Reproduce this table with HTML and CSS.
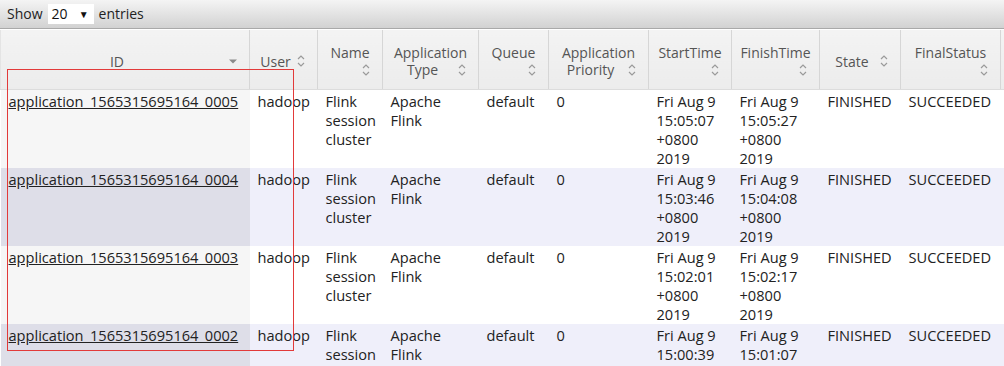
FILE: index.html
```html
<!DOCTYPE html>
<html>
<head>
<meta charset="utf-8">
<link rel="stylesheet" href="styles.css">
</head>
<body>
<div class="page">
  <div class="toolbar">
    <span>Show</span>
    <span class="select"><span>20</span><span class="caret">&#9660;</span></span>
    <span>entries</span>
  </div>
  <table class="apps">
    <colgroup>
      <col class="c-id"><col class="c-user"><col class="c-name"><col class="c-type"><col class="c-queue"><col class="c-prio"><col class="c-start"><col class="c-finish"><col class="c-state"><col class="c-final"><col class="c-more">
    </colgroup>
    <thead>
      <tr>
        <th><div class="sw">ID<span class="si"><svg width="10" height="16" viewBox="0 0 10 16"><polygon points="1,6.5 9,6.5 5,10.5" fill="#8a8a8a"/></svg></span></div></th>
        <th><div class="sw">User<span class="si"><svg class="both" width="10" height="16" viewBox="0 0 10 16"><polyline points="2,6 5,3 8,6"/><polyline points="2,10 5,13 8,10"/></svg></span></div></th>
        <th><div class="sw">Name<span class="si"><svg class="both" width="10" height="16" viewBox="0 0 10 16"><polyline points="2,6 5,3 8,6"/><polyline points="2,10 5,13 8,10"/></svg></span></div></th>
        <th><div class="sw">Application Type<span class="si"><svg class="both" width="10" height="16" viewBox="0 0 10 16"><polyline points="2,6 5,3 8,6"/><polyline points="2,10 5,13 8,10"/></svg></span></div></th>
        <th><div class="sw">Queue<span class="si"><svg class="both" width="10" height="16" viewBox="0 0 10 16"><polyline points="2,6 5,3 8,6"/><polyline points="2,10 5,13 8,10"/></svg></span></div></th>
        <th><div class="sw">Application Priority<span class="si"><svg class="both" width="10" height="16" viewBox="0 0 10 16"><polyline points="2,6 5,3 8,6"/><polyline points="2,10 5,13 8,10"/></svg></span></div></th>
        <th><div class="sw">StartTime<span class="si"><svg class="both" width="10" height="16" viewBox="0 0 10 16"><polyline points="2,6 5,3 8,6"/><polyline points="2,10 5,13 8,10"/></svg></span></div></th>
        <th><div class="sw">FinishTime<span class="si"><svg class="both" width="10" height="16" viewBox="0 0 10 16"><polyline points="2,6 5,3 8,6"/><polyline points="2,10 5,13 8,10"/></svg></span></div></th>
        <th><div class="sw">State<span class="si"><svg class="both" width="10" height="16" viewBox="0 0 10 16"><polyline points="2,6 5,3 8,6"/><polyline points="2,10 5,13 8,10"/></svg></span></div></th>
        <th><div class="sw">FinalStatus<span class="si"><svg class="both" width="10" height="16" viewBox="0 0 10 16"><polyline points="2,6 5,3 8,6"/><polyline points="2,10 5,13 8,10"/></svg></span></div></th>
        <th></th>
      </tr>
    </thead>
    <tbody>
      <tr class="odd">
        <td class="sorted"><a href="#">application_1565315695164_0005</a></td>
        <td>hadoop</td><td>Flink session cluster</td><td>Apache Flink</td><td>default</td><td>0</td>
        <td>Fri Aug 9 15:05:07 +0800 2019</td><td>Fri Aug 9 15:05:27 +0800 2019</td>
        <td>FINISHED</td><td>SUCCEEDED</td><td></td>
      </tr>
      <tr class="even">
        <td class="sorted"><a href="#">application_1565315695164_0004</a></td>
        <td>hadoop</td><td>Flink session cluster</td><td>Apache Flink</td><td>default</td><td>0</td>
        <td>Fri Aug 9 15:03:46 +0800 2019</td><td>Fri Aug 9 15:04:08 +0800 2019</td>
        <td>FINISHED</td><td>SUCCEEDED</td><td></td>
      </tr>
      <tr class="odd">
        <td class="sorted"><a href="#">application_1565315695164_0003</a></td>
        <td>hadoop</td><td>Flink session cluster</td><td>Apache Flink</td><td>default</td><td>0</td>
        <td>Fri Aug 9 15:02:01 +0800 2019</td><td>Fri Aug 9 15:02:17 +0800 2019</td>
        <td>FINISHED</td><td>SUCCEEDED</td><td></td>
      </tr>
      <tr class="even">
        <td class="sorted"><a href="#">application_1565315695164_0002</a></td>
        <td>hadoop</td><td>Flink session cluster</td><td>Apache Flink</td><td>default</td><td>0</td>
        <td>Fri Aug 9 15:00:39 +0800 2019</td><td>Fri Aug 9 15:01:07 +0800 2019</td>
        <td>FINISHED</td><td>SUCCEEDED</td><td></td>
      </tr>
    </tbody>
  </table>
  <div class="highlight"></div>
</div>
</body>
</html>
```

FILE: styles.css
```css
html, body {
  margin: 0;
  padding: 0;
  background: #fff;
  overflow: hidden;
}
.page {
  position: relative;
  width: 1004px;
  height: 366px;
  overflow: hidden;
  font-family: "Open Sans", "Noto Sans", sans-serif;
  font-size: 14.6px;
  color: #222;
}
.toolbar {
  height: 29px;
  box-sizing: border-box;
  border-bottom: 1px solid #a9a9a9;
  background: linear-gradient(#f4f4f4, #d2d2d2);
  display: flex;
  align-items: center;
  gap: 5px;
  padding-left: 7px;
  color: #222;
  font-size: 14px;
  line-height: 18px;
}
.select {
  display: inline-flex;
  align-items: center;
  justify-content: space-between;
  width: 46px;
  height: 20px;
  box-sizing: border-box;
  padding: 0 5px 0 4px;
  background: #fff;
  color: #111;
}
.caret {
  font-size: 10px;
  color: #111;
}
.apps {
  border-collapse: collapse;
  table-layout: fixed;
  width: 1100px;
  margin-top: 1px;
}
.c-id { width: 249px; }
.c-user { width: 68px; }
.c-name { width: 65px; }
.c-type { width: 96px; }
.c-queue { width: 70px; }
.c-prio { width: 100px; }
.c-start { width: 83px; }
.c-finish { width: 88px; }
.c-state { width: 81px; }
.c-final { width: 100px; }
.c-more { width: 100px; }
.apps th {
  height: 59px;
  box-sizing: border-box;
  padding: 5px 8px 1px;
  background: linear-gradient(#f3f3f3, #ececec);
  border-right: 1px solid #d6d6d6;
  border-bottom: 1px solid #dcdcdc;
  color: #555;
  font-size: 14px;
  font-weight: normal;
  text-align: center;
  vertical-align: middle;
  line-height: 17px;
}
.apps th:first-child {
  border-left: 1px solid #e4e4e4;
}
.si {
  float: right;
  width: 16px;
  height: 17px;
  display: flex;
  justify-content: center;
  align-items: center;
}
.si svg.both polyline {
  fill: none;
  stroke: #9a9a9a;
  stroke-width: 1.2;
}
.apps td {
  padding: 2px 8px 0;
  line-height: 19px;
  vertical-align: top;
  color: #222;
  height: 76px;
}
.apps td a {
  color: #222;
}
.odd td { background: #fff; }
.odd td.sorted { background: #f6f6f6; }
.even td { background: #efeffa; }
.even td.sorted { background: #dedee8; }
.highlight {
  position: absolute;
  left: 7px;
  top: 69px;
  width: 285px;
  height: 280px;
  border: 1px solid #e23a3a;
}
```
